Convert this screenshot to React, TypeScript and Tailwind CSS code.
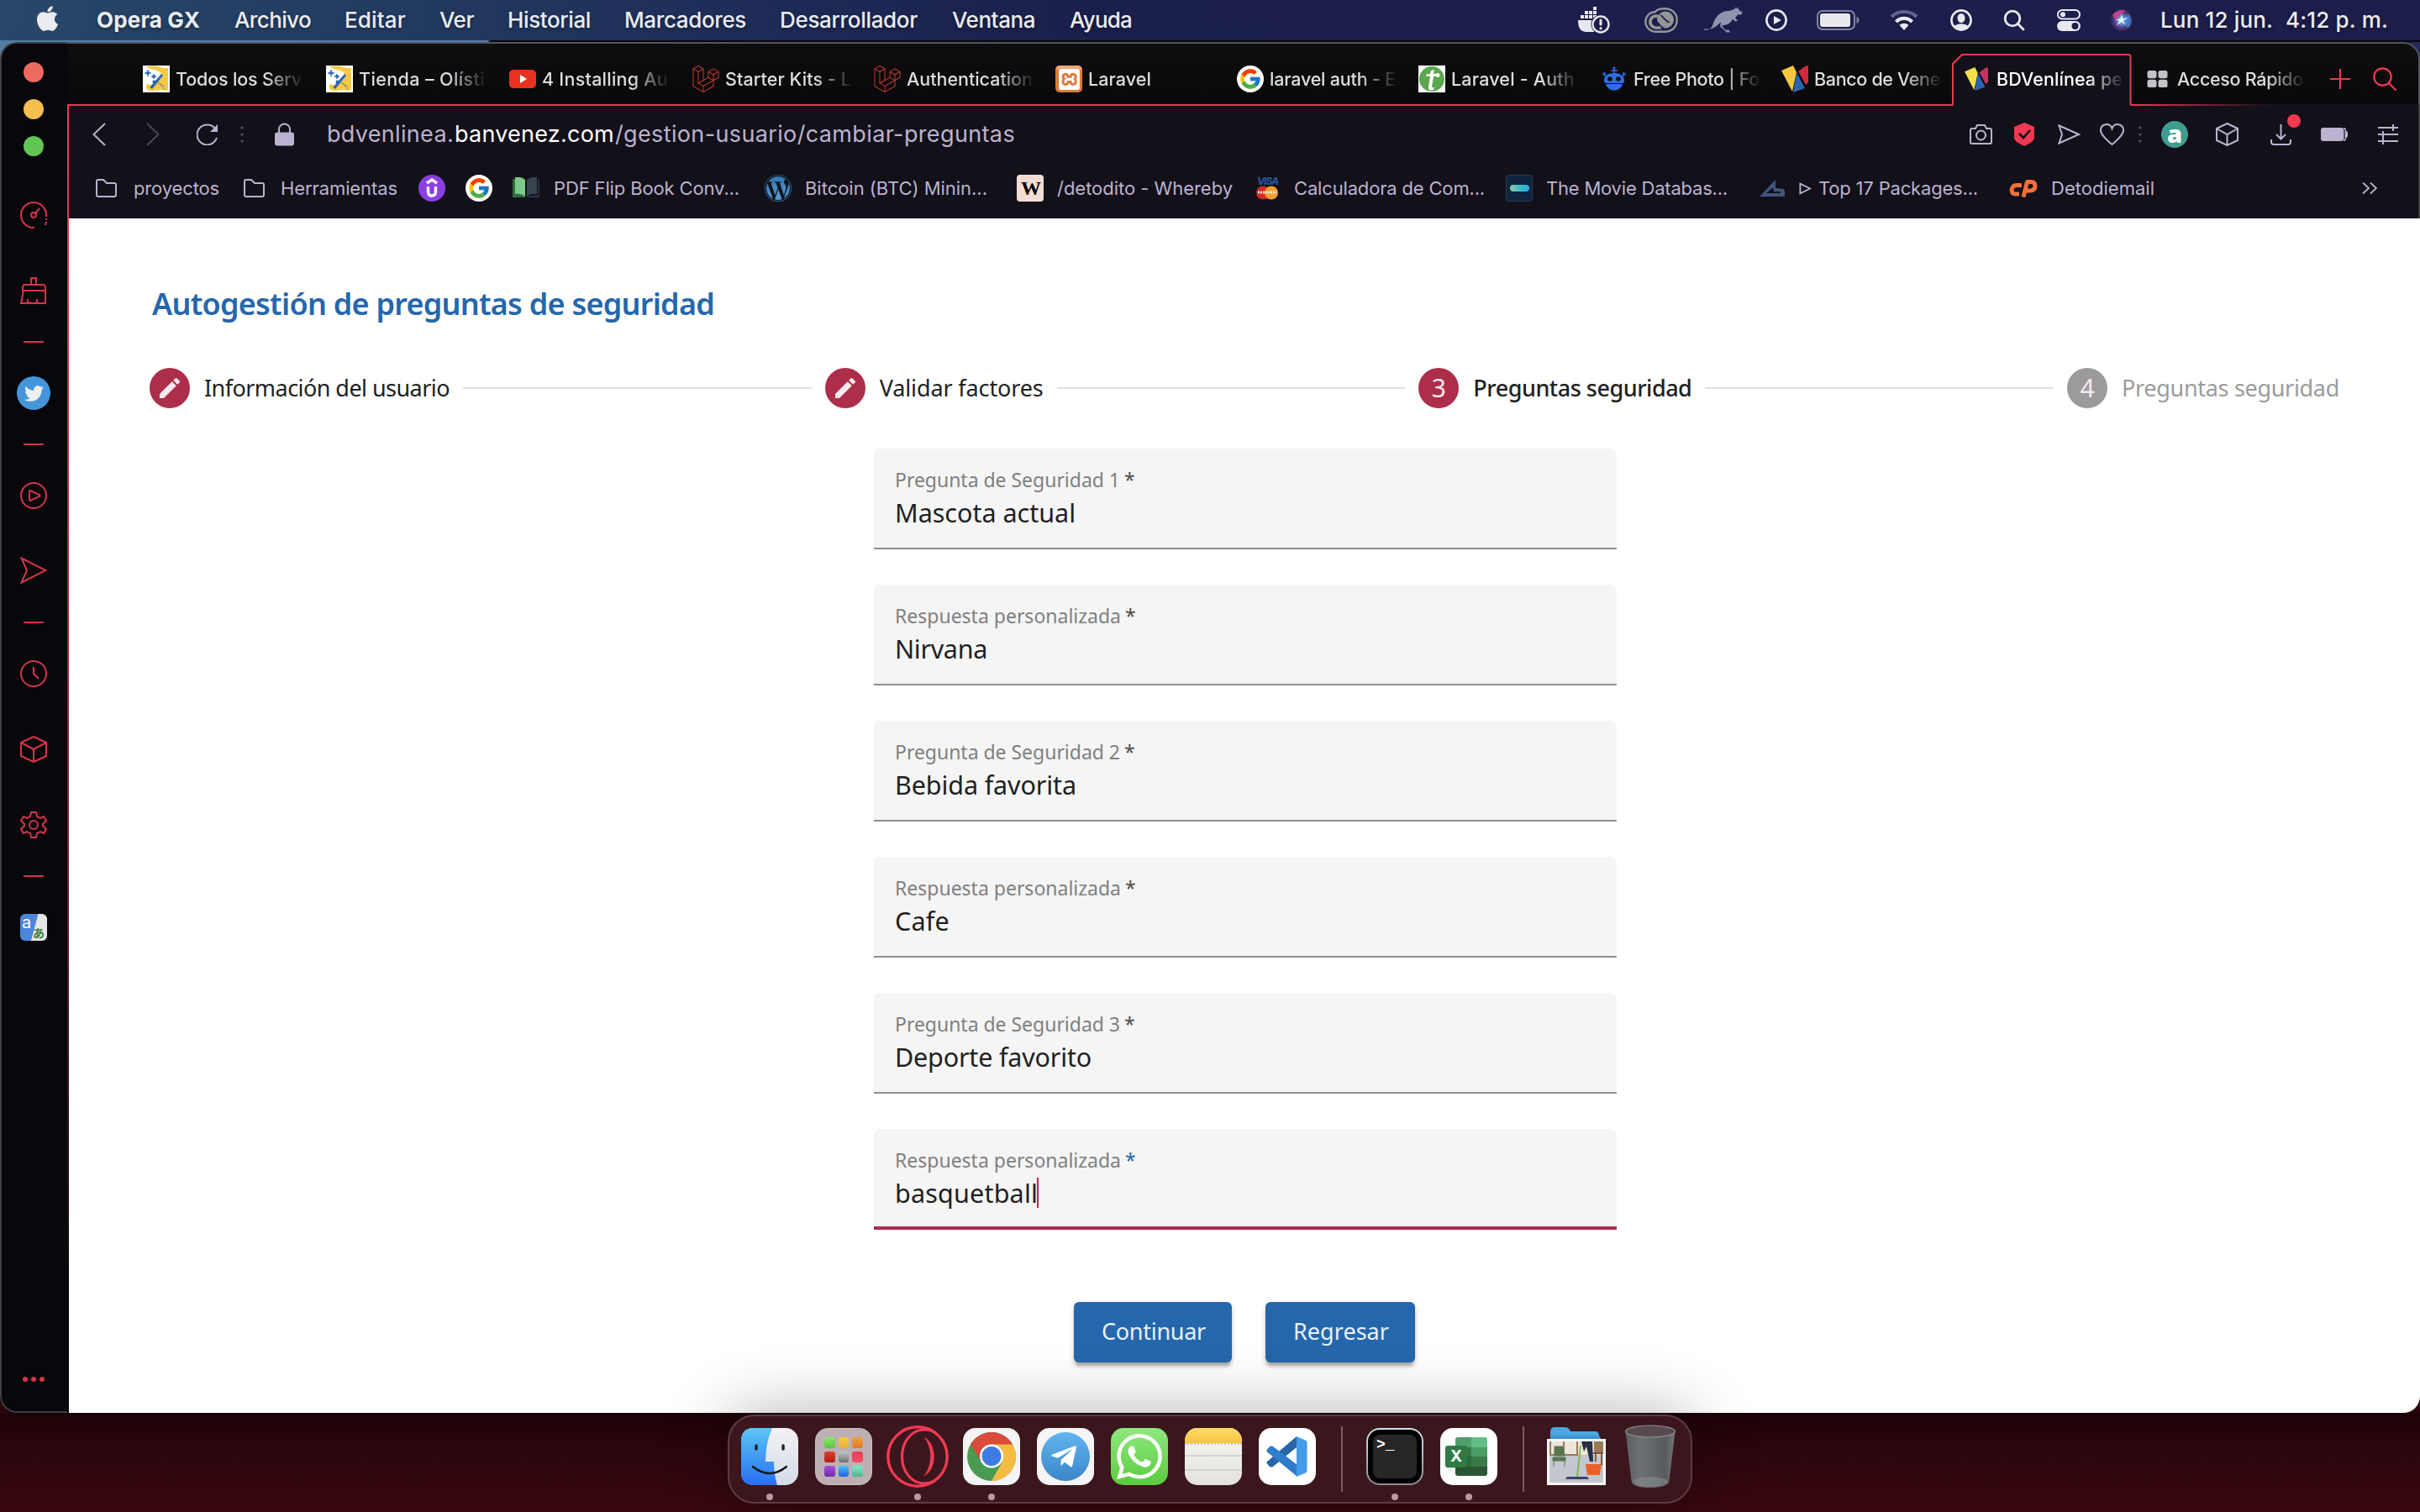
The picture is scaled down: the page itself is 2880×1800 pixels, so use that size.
import { useLayoutEffect, useRef, type ReactNode } from "react";
import { FaApple, FaDocker, FaLaravel, FaTwitter, FaWordpressSimple, FaTelegramPlane } from "react-icons/fa";
import { FcGoogle } from "react-icons/fc";
import { SiXampp, SiWhatsapp } from "react-icons/si";

/** Single line of text whose letter spacing is adjusted so that it fills its box. */
function Fit({ children, className = "" }: { children: string; className?: string }) {
  const box = useRef<HTMLSpanElement>(null);
  const text = useRef<HTMLSpanElement>(null);
  useLayoutEffect(() => {
    if (!box.current || !text.current) return;
    text.current.style.letterSpacing = "0px";
    const space = box.current.getBoundingClientRect().width - 1 - text.current.getBoundingClientRect().width;
    text.current.style.letterSpacing = `${space / children.length}px`;
  }, [children]);
  return (
    <span ref={box} className={`block shrink-0 pl-[1px] whitespace-pre ${className}`}>
      <span ref={text}>{children}</span>
    </span>
  );
}

/* ---------- menu bar ---------- */

const menus: [string, string][] = [
  ["Archivo", "w-[92px] ml-[40px]"],
  ["Editar", "w-[74px] ml-[39px]"],
  ["Ver", "w-[42px] ml-[39px]"],
  ["Historial", "w-[100px] ml-[39px]"],
  ["Marcadores", "w-[146px] ml-[39px]"],
  ["Desarrollador", "w-[165px] ml-[39px]"],
  ["Ventana", "w-[100px] ml-[40px]"],
  ["Ayuda", "w-[75px] ml-[40px]"],
];

function MenuBar() {
  return (
    <header className="flex h-[48px] items-center bg-[linear-gradient(90deg,#284769_0%,#223a60_17%,#1e2b56_32%,#1b1f4c_44%,#1c1d4a_100%)] pr-[38px] pb-[1px] pl-[43px] text-[26px] font-medium text-[#ebecf1] [text-shadow:0_2px_4px_rgba(0,0,0,0.35)]">
      <FaApple className="-mt-1 h-[34px] w-[27px] shrink-0" />
      <Fit className="ml-[44px] w-[124px] font-bold">Opera GX</Fit>
      {menus.map(([label, cls]) => (
        <Fit key={label} className={cls}>
          {label}
        </Fit>
      ))}
      <div className="ml-auto flex items-center">
        <svg viewBox="0 0 40 34" className="h-[34px] w-[40px]" fill="#e8e8ee">
          <path d="M1 17h23a10 10 0 0 0-2 14H11C4 31 1 26 1 17z" />
          <path d="M4 11h4v4H4zM9 11h4v4H9zM14 11h4v4h-4zM19 11h4v4h-4zM9 6h4v4H9zM14 6h4v4h-4zM19 1h4v4h-4zM19 6h4v4h-4z" />
          <circle cx="28" cy="22" r="11.500" fill="#1c1d4a" />
          <circle cx="28" cy="22" r="9.500" fill="#1c1d4a" stroke="#e8e8ee" strokeWidth="2.400" />
          <path d="M28 17v5M28 26.500v.5" stroke="#e8e8ee" strokeWidth="3" strokeLinecap="round" />
        </svg>
        <svg viewBox="0 0 40 30" className="ml-[40px] h-[30px] w-[40px]">
          <path
            d="M13 5C15 2.500 19 1.300 24 1.300c8 0 14.700 5 14.700 13.200S33 28.700 25 28.700H14C7 28.700 1.300 23.500 1.300 17 1.300 10.500 6 5.500 13 5z"
            fill="none"
            stroke="#959597"
            strokeWidth="2.400"
          />
          <circle cx="25" cy="14.500" r="10" fill="#959597" />
          <path d="M20 24h-6a7 7 0 1 1 3-13.300c3 1.300 5 6.300 9 8.300" fill="none" stroke="#959597" strokeWidth="3.600" />
          <path d="M12 16.500c4-1 6 6 11 8M19 9c4 2 6 8 11 8.500" fill="none" stroke="#1c1d4a" strokeWidth="1.600" />
        </svg>
        <svg viewBox="0 0 46 32" className="ml-[31px] h-[32px] w-[46px]" fill="#9093ab">
          <path d="M0 27.500c5 1 8-1 10-5C12 15 16 9 23 6c5-1.500 8-.5 11-2.500l3-1L36.500.500l2.500 2 .5-2.500 2 4 4.500 3-2 2.500h-4l-3 4 3 3-3 1-3-3c-1 3-4 6-8 7l-5 1 4 5 5 .500.500 2.500h-3.500l-8-7 1-5c-4 3-6 6-12 8H0z" />
        </svg>
        <svg viewBox="0 0 26 26" className="ml-[27px] size-[26px]" fill="none" stroke="#e8e8ee" strokeWidth="2.600">
          <circle cx="13" cy="13" r="11.600" />
          <path d="M10 8l9 5-9 5z" fill="#e8e8ee" stroke="none" />
        </svg>
        <svg viewBox="0 0 51 24" className="ml-[35px] h-[24px] w-[51px]">
          <rect x="1" y="1" width="44" height="22" rx="6" fill="none" stroke="#83849f" strokeWidth="2" />
          <rect x="4" y="4" width="36" height="16" rx="3" fill="#e8e8ee" />
          <path d="M47.500 8c4 1 4 7 0 8z" fill="#83849f" />
        </svg>
        <svg viewBox="0 0 34 25" className="ml-[36px] h-[25px] w-[34px]" fill="none" strokeWidth="4.200">
          <path d="M2 9c8-8 22-8 30 0" stroke="#62648a" />
          <path d="M7.500 15c5-5.500 14-5.500 19 0" stroke="#e8e8ee" />
          <path d="M11.500 19c3-3 8-3 11 0L17 25z" fill="#e8e8ee" />
        </svg>
        <svg viewBox="0 0 26 26" className="ml-[38px] size-[26px]" fill="none" stroke="#e8e8ee" strokeWidth="2.600">
          <circle cx="13" cy="13" r="11.600" />
          <ellipse cx="13" cy="10.500" rx="4.500" ry="5.500" fill="#e8e8ee" stroke="none" />
          <path d="M4 21c4-5 14-5 18 0-4 5-14 5-18 0z" fill="#e8e8ee" stroke="none" />
        </svg>
        <svg viewBox="0 0 26 26" className="ml-[37px] size-[26px]" fill="none" stroke="#e8e8ee" strokeWidth="2.800" strokeLinecap="round">
          <circle cx="11" cy="11" r="8.800" />
          <path d="M17.500 17.500l6.500 6.500" />
        </svg>
        <svg viewBox="0 0 28 26" className="ml-[38px] h-[26px] w-[28px]">
          <rect x="1" y="1" width="26" height="10.500" rx="5.250" fill="none" stroke="#e8e8ee" strokeWidth="2" />
          <circle cx="7" cy="6.200" r="3" fill="#e8e8ee" />
          <rect x="0" y="14" width="28" height="12" rx="6" fill="#e8e8ee" />
          <circle cx="21.500" cy="20" r="4" fill="#1c1d4a" />
        </svg>
        <svg viewBox="0 0 28 28" className="ml-[35px] size-[28px]">
          <defs>
            <radialGradient id="siri">
              <stop offset="0" stopColor="#e8f6fa" />
              <stop offset="0.3" stopColor="#5aa6c8" />
              <stop offset="0.65" stopColor="#5a3a8e" />
              <stop offset="1" stopColor="#2a2348" />
            </radialGradient>
          </defs>
          <circle cx="14" cy="14" r="13.500" fill="url(#siri)" />
          <path d="M3 8c4-6 12-7 16-5-5 2-9 6-11 12z" fill="#d8478f" opacity=".8" />
          <path d="M22 7c5 5 4 13-1 17-1-4-4-8-7-10z" fill="#3f8fe0" opacity=".7" />
          <path d="M14 6l.8 6.500 7-1.500-6 3.500 3 6-4.800-5-6 5 3.500-6-5-1 6-1z" fill="#eafaff" />
        </svg>
        <Fit className="ml-[31px] w-[135px]">Lun 12 jun.</Fit>
        <Fit className="ml-[14px] w-[123px]">4:12 p. m.</Fit>
      </div>
    </header>
  );
}

/* ---------- favicons ---------- */

const WandIcon = () => (
  <svg viewBox="0 0 32 32" className="size-[32px] shrink-0">
    <rect width="32" height="32" fill="#fff" />
    <path d="M4 2c8-3 14-1 20 1h6v26c-4 3-8-2-12 1-3-2-8 2-12-1-3-2-3-5 0-8l6 2 10-14C18 5 10 5 4 2z" fill="#f6c945" />
    <path d="M7 6l9 0 6 6-10 13-8-4z" fill="#fff" />
    <path d="M22 10l2 2L11 28l-3-2z" fill="#2b67b4" />
    <path d="M6 5l1 3 3 1-3 1-1 3-1-3-3-1 3-1zM13 10l1 2 2 1-2 1-1 2-1-2-2-1 2-1zM12 18h3v3h-3zM20 21l6 8M17 20l9 5" fill="#2b67b4" stroke="#2b67b4" strokeWidth=".6" />
  </svg>
);

const YouTubeIcon = () => (
  <svg viewBox="0 0 32 32" className="size-[32px] shrink-0">
    <rect y="5" width="32" height="22" rx="5" fill="#e8321f" />
    <path d="M13 11l8 5-8 5z" fill="#fff" />
  </svg>
);

const LaravelIcon = () => <FaLaravel className="size-[32px] shrink-0 text-[#c8392b]" />;

const XamppIcon = () => (
  <span className="flex size-[32px] shrink-0 items-center justify-center rounded-[5px] bg-[linear-gradient(#f0a878_0_3px,#e07a35_6px)]">
    <SiXampp className="size-[25px] text-white" />
  </span>
);

const GoogleIcon = () => (
  <span className="flex size-[32px] shrink-0 items-center justify-center rounded-full bg-white">
    <FcGoogle className="size-[28px]" />
  </span>
);

const TutIcon = () => (
  <svg viewBox="0 0 32 32" className="size-[32px] shrink-0">
    <rect width="32" height="32" fill="#fff" />
    <circle cx="16" cy="16" r="15" fill="#5ba64f" />
    <path d="M15 6l4-1-1 5h5l-1 3h-4l-2 12q0 2 3 1l-1 3q-7 2-6-4l2-12h-5l1-3h4z" fill="#fff" />
    <circle cx="23" cy="11.500" r="2.500" fill="#fff" />
  </svg>
);

const RobotIcon = () => (
  <svg viewBox="0 0 32 32" className="size-[32px] shrink-0" fill="#2c6fe0">
    <path d="M4 18C4 11 10 9 16 9s12 2 12 9c0 2-1 3-2 3H6c-1 0-2-1-2-3zM6 22h20c-1 5-6 7.500-10 7.500S7 27 6 22z" />
    <path d="M12 6h8M16 2v8M2 9l4 4M5 8l0 3M30 9l-4 4M27 8l0 3" stroke="#2c6fe0" strokeWidth="1.600" />
    <circle cx="16" cy="3" r="1.600" />
    <circle cx="11" cy="16" r="2.800" fill="#0b0b0f" />
    <circle cx="21" cy="16" r="2.800" fill="#0b0b0f" />
  </svg>
);

const BdvIcon = ({ active = false }: { active?: boolean }) => (
  <svg viewBox="0 0 32 32" className={active ? "mr-[3px] h-[30px] w-[28px] shrink-0" : "size-[32px] shrink-0"}>
    <path d="M0 6l14-6 4 8-5 23z" fill={active ? "#f5e04a" : "#f5c842"} />
    <path d="M20 7l8-6 4-1v20l-3 3z" fill={active ? "#c2335f" : "#cf2b3c"} />
    <path d="M18 8l10 19-14 5z" fill="#2b65ad" />
  </svg>
);

const SpeedDialIcon = () => (
  <svg viewBox="0 0 24 20" className="h-[20px] w-[25px] shrink-0" fill="#c3c4c8">
    <rect width="11" height="9.200" rx="2.600" />
    <rect x="13" width="11" height="9.200" rx="2.600" />
    <rect y="10.800" width="11" height="9.200" rx="2.600" />
    <rect x="13" y="10.800" width="11" height="9.200" rx="2.600" />
  </svg>
);

/* ---------- tab strip ---------- */

type TabDef = { icon: ReactNode; label: string; tab: string; text: string };

const tabs: TabDef[] = [
  { icon: <WandIcon />, label: "Todos los Serv", tab: "w-[218px]", text: "w-[151px]" },
  { icon: <WandIcon />, label: "Tienda – Olísti", tab: "w-[218px]", text: "w-[151px]" },
  { icon: <YouTubeIcon />, label: "4 Installing Au", tab: "w-[218px]", text: "w-[151px]" },
  { icon: <LaravelIcon />, label: "Starter Kits - L", tab: "w-[216px]", text: "w-[151px]" },
  { icon: <LaravelIcon />, label: "Authentication", tab: "w-[216px]", text: "w-[151px]" },
  { icon: <XamppIcon />, label: "Laravel", tab: "w-[216px]", text: "w-[76px]" },
  { icon: <GoogleIcon />, label: "laravel auth - E", tab: "w-[216px]", text: "w-[151px]" },
  { icon: <TutIcon />, label: "Laravel - Auth", tab: "w-[217px]", text: "w-[148px]" },
  { icon: <RobotIcon />, label: "Free Photo | Fo", tab: "w-[215px]", text: "w-[151px]" },
  { icon: <BdvIcon />, label: "Banco de Vene", tab: "w-[218px]", text: "w-[151px]" },
];

function TabLabel({ label, text, tone = "text-[#dedee0]" }: { label: string; text: string; tone?: string }) {
  return (
    <div className="ml-[6px] w-[154px] shrink-0 [mask-image:linear-gradient(90deg,#000_70%,transparent_100%)]">
      <Fit className={`${text} ${tone}`}>{label}</Fit>
    </div>
  );
}

function TabStrip() {
  return (
    <div className="h-[74px] rounded-tr-[20px] border-t-2 border-r-2 border-[#55565a] bg-[linear-gradient(180deg,#0e0e11,#09090c)]">
      <div className="mt-[12px] flex h-[60px] items-center pl-[76px] text-[21.500px] font-medium">
        {tabs.map((t, i) => (
          <div key={i} className={`flex shrink-0 items-center pl-[14px] ${t.tab}`}>
            {t.icon}
            <TabLabel label={t.label} text={t.text} />
          </div>
        ))}
        <div className="relative flex h-full w-[217px] shrink-0 items-center pl-[14px]">
          <svg viewBox="0 0 216 62" className="absolute top-0 -left-[1px] h-[62px] w-[216px]" fill="#121019" stroke="#ee3950" strokeWidth="2">
            <path d="M0 61.200q1 0 1-2V12L12 1h198q2.500 0 2.500 2.500V59q0 2 2 2.200" />
            <path d="M2 62h210" stroke="#121019" />
          </svg>
          <div className="relative flex items-center">
            <BdvIcon active />
            <TabLabel label="BDVenlínea pe" text="w-[151px]" tone="text-white" />
          </div>
        </div>
        <div className="flex w-[218px] shrink-0 items-center pl-[14px]">
          <SpeedDialIcon />
          <span className="w-[4px] shrink-0" />
          <TabLabel label="Acceso Rápido" text="w-[151px]" />
        </div>
        <svg viewBox="0 0 24 24" className="ml-[14px] size-[24px] shrink-0" stroke="#ee3950" strokeWidth="2.200">
          <path d="M12 0v24M0 12h24" />
        </svg>
        <svg viewBox="0 0 28 28" className="ml-[27px] size-[28px] shrink-0" fill="none" stroke="#ee3950" strokeWidth="2.200">
          <circle cx="11.500" cy="11.500" r="10.200" />
          <path d="M19 19l8.500 8.500" />
        </svg>
      </div>
    </div>
  );
}

/* ---------- address bar ---------- */

const Dots = ({ className }: { className: string }) => (
  <svg viewBox="0 0 4 20" className={`h-[20px] w-[4px] shrink-0 ${className}`} fill="#57516a">
    <circle cx="2" cy="2" r="1.600" />
    <circle cx="2" cy="10" r="1.600" />
    <circle cx="2" cy="18" r="1.600" />
  </svg>
);

function AddressBar() {
  return (
    <div className="flex h-[68px] items-center pl-[28px] text-[27px] text-[#bbb3d0]">
      <svg viewBox="0 0 16 28" className="h-[28px] w-[16px]" fill="none" stroke="#bbb3d0" strokeWidth="2">
        <path d="M15 1L1.500 14 15 27" />
      </svg>
      <svg viewBox="0 0 16 28" className="ml-[48px] h-[28px] w-[16px]" fill="none" stroke="#4a4557" strokeWidth="2">
        <path d="M1 1l13.500 13L1 27" />
      </svg>
      <svg viewBox="0 0 26 26" className="ml-[44px] size-[26px]" fill="none" stroke="#bbb3d0" strokeWidth="2">
        <path d="M24 17A12 12 0 1 1 22 6" />
        <path d="M25 1v9h-9z" fill="#bbb3d0" stroke="none" />
      </svg>
      <Dots className="ml-[26px]" />
      <svg viewBox="0 0 23 28" className="ml-[37px] h-[28px] w-[23px]">
        <path d="M5 13V8a6.500 6.500 0 0 1 13 0v5" fill="none" stroke="#bbb3d0" strokeWidth="2" />
        <rect y="11.500" width="23" height="16" rx="3" fill="#bbb3d0" />
      </svg>
      <div className="ml-[38px] flex pt-[1px]">
        <Fit className="w-[152px]">bdvenlinea.</Fit>
        <Fit className="w-[191px] text-white">banvenez.com</Fit>
        <Fit className="w-[477px]">/gestion-usuario/cambiar-preguntas</Fit>
      </div>
      <div className="mr-[24px] ml-auto flex items-center">
        <svg viewBox="0 0 27 24" className="h-[24px] w-[27px]" fill="none" stroke="#bbb3d0" strokeWidth="2">
          <path d="M1 21V7q0-2 2-2h4l2-4h9l2 4h4q2 0 2 2v14q0 2-2 2H3q-2 0-2-2z" />
          <circle cx="13.500" cy="13" r="5.500" />
        </svg>
        <svg viewBox="0 0 24 28" className="ml-[26px] h-[28px] w-[24px]">
          <path d="M12 0l12 5v13c0 4-6 7-12 10C6 25 0 22 0 18V5z" fill="#ee3950" />
          <path d="M6 13l5 5 8-9" fill="none" stroke="#121019" strokeWidth="2.600" />
        </svg>
        <svg viewBox="0 0 27 24" className="ml-[28px] h-[24px] w-[27px]" fill="none" stroke="#bbb3d0" strokeWidth="2">
          <path d="M1.500 1.500L25 12 1.500 22.500 5 12z" />
        </svg>
        <svg viewBox="0 0 29 26" className="ml-[23px] h-[26px] w-[29px]" fill="none" stroke="#bbb3d0" strokeWidth="2">
          <path d="M14.500 25C6 18 1 13 1 8c0-8 11-9.500 13.500-2C17-1.500 28 0 28 8c0 5-5 10-13.500 17z" />
        </svg>
        <Dots className="ml-[17px]" />
        <span className="ml-[23px] flex size-[32px] items-center justify-center rounded-full bg-[#3f9d8f] pb-[4px] font-['Open_Sans'] text-[29px] leading-none font-extrabold text-white">
          a
        </span>
        <svg viewBox="0 0 27 28" className="ml-[33px] h-[28px] w-[27px]" fill="none" stroke="#bbb3d0" strokeWidth="2">
          <path d="M13.500 1L26 7v14l-12.500 6L1 21V7zM1 7l12.500 7L26 7M13.500 14v13" />
        </svg>
        <div className="relative ml-[38px]">
          <svg viewBox="0 0 25 25" className="size-[25px]" fill="none" stroke="#bbb3d0" strokeWidth="2">
            <path d="M12.500 0v17M7 12l5.500 5.500L18 12M1 18v3q0 3 3 3h17q3 0 3-3v-3" />
          </svg>
          <span className="absolute -top-[12px] left-[20px] size-[16px] rounded-full bg-[#ee3950]" />
        </div>
        <svg viewBox="0 0 32 16" className="ml-[35px] h-[16px] w-[32px]">
          <rect width="27" height="16" rx="3" fill="#bbb3d0" />
          <path d="M27 0q3 0 3 3v1q2 0 2 2v4q0 2-2 2v1q0 3-3 3z" fill="#bbb3d0" />
          <path d="M28 2v12" stroke="#121019" strokeWidth="1.200" />
        </svg>
        <svg viewBox="0 0 24 24" className="ml-[36px] size-[24px]" stroke="#bbb3d0" strokeWidth="2">
          <path d="M0 4h24M0 12h24M0 20h24M18 0v8M6 8v8M6 16v8" />
        </svg>
      </div>
    </div>
  );
}

/* ---------- bookmarks ---------- */

const Folder = ({ className = "" }: { className?: string }) => (
  <svg viewBox="0 0 25 22" className={`h-[22px] w-[25px] shrink-0 ${className}`} fill="none" stroke="#bbb3d0" strokeWidth="2">
    <path d="M1 19V3q0-2 2-2h6l4 4h9q2 0 2 2v12q0 2-2 2H3q-2 0-2-2z" />
  </svg>
);

function Bookmarks() {
  return (
    <div className="flex h-[66px] items-center pb-[6px] pl-[32px] text-[22px] text-[#bbb3d0]">
      <Folder />
      <Fit className="ml-[19px] w-[103px]">proyectos</Fit>
      <Folder className="ml-[29px]" />
      <Fit className="ml-[18px] w-[140px]">Herramientas</Fit>
      <svg viewBox="0 0 32 32" className="ml-[25px] size-[32px] shrink-0">
        <circle cx="16" cy="16" r="16" fill="#8c3fe0" />
        <path d="M10 10l6-4 6 4M11.500 14v6q0 5 4.500 5t4.500-5v-6" fill="none" stroke="#fff" strokeWidth="3.400" />
      </svg>
      <span className="ml-[24px]">
        <GoogleIcon />
      </span>
      <svg viewBox="0 0 32 26" className="ml-[24px] h-[26px] w-[32px] shrink-0">
        <path d="M0 2h3v18h12v4H0z" fill="#2f6b3c" />
        <path d="M3 0q8-1 12 3v20q-5-4-12-3z" fill="#7cc88a" />
        <path d="M29 0q-8-1-12 3v20q5-4 12-3z" fill="#3a4350" />
        <path d="M30 2h2v22H17v-1.500l13-1z" fill="#2b323c" />
      </svg>
      <Fit className="ml-[16px] w-[222px]">PDF Flip Book Conv...</Fit>
      <span className="ml-[30px] flex size-[32px] shrink-0 items-center justify-center rounded-full bg-[linear-gradient(#2f74b0,#56a0d4)]">
        <FaWordpressSimple className="size-[32px] text-[#11141d]" />
      </span>
      <Fit className="ml-[15px] w-[218px]">Bitcoin (BTC) Minin...</Fit>
      <span className="ml-[35px] flex size-[32px] shrink-0 items-center justify-center rounded-[4px] bg-[#f3dcd4] font-['Liberation_Serif'] text-[24px] leading-none font-bold tracking-[-2px] text-black">
        W
      </span>
      <Fit className="ml-[15px] w-[210px]">/detodito - Whereby</Fit>
      <span className="ml-[27px] flex w-[28px] shrink-0 flex-col items-center">
        <Fit className="h-[11px] w-[26px] text-[12px] leading-[11px] font-extrabold text-[#23569c] italic">VISA</Fit>
        <svg viewBox="0 0 28 17" className="h-[17px] w-[28px]">
          <circle cx="9" cy="8.500" r="8" fill="#d42b22" />
          <circle cx="19" cy="8.500" r="8" fill="#f0a030" />
          <path d="M3 8h22" stroke="#f6e8dc" strokeWidth="3" strokeDasharray="2 1" />
        </svg>
      </span>
      <Fit className="ml-[17px] w-[228px]">Calculadora de Com...</Fit>
      <span className="ml-[25px] flex size-[32px] shrink-0 items-center justify-center rounded-[4px] border border-[#2a3c50] bg-[#0d253f]">
        <span className="h-[8px] w-[23px] rounded-full bg-[linear-gradient(90deg,#90cea1,#3cbec9,#31abe0)]" />
      </span>
      <Fit className="ml-[15px] w-[217px]">The Movie Databas...</Fit>
      <svg viewBox="0 0 30 20" className="ml-[38px] h-[20px] w-[30px] shrink-0" fill="#40557f">
        <path d="M0 20L19 0v10l10 1 1 3v6H0zM8 16h17v-2h-8l-1-5z" fillRule="evenodd" />
      </svg>
      <svg viewBox="0 0 16 16" className="ml-[17px] h-[15px] w-[15px] shrink-0" fill="none" stroke="#bbb3d0" strokeWidth="2">
        <path d="M1.500 1.800L14 8 1.500 14.200z" />
      </svg>
      <Fit className="ml-[7px] w-[191px]">Top 17 Packages...</Fit>
      <svg viewBox="0 0 34 22" className="ml-[37px] h-[22px] w-[34px] shrink-0" fill="none" stroke="#f0703a" strokeWidth="5" strokeLinejoin="round">
        <path d="M15 7.500H9q-5 0-6 5.500 0 5 5 5h4" />
        <path d="M17 21.500l4.500-18H26q5 0 5 5t-6 5.500h-5" />
      </svg>
      <Fit className="ml-[15px] w-[124px]">Detodiemail</Fit>
      <svg viewBox="0 0 18 14" className="mr-[49px] ml-auto h-[14px] w-[18px] shrink-0" fill="none" stroke="#bbb3d0" strokeWidth="1.800">
        <path d="M1 .500L8 7l-7 6.500M10 .500L17 7l-7 6.500" />
      </svg>
    </div>
  );
}

/* ---------- sidebar ---------- */

const SideLine = ({ className }: { className: string }) => <span className={`h-[2px] w-[24px] shrink-0 bg-[#d4344a] ${className}`} />;

function SideIcon({ className, children }: { className: string; children: ReactNode }) {
  return (
    <svg viewBox="0 0 32 32" className={`size-[32px] shrink-0 ${className}`} fill="none" stroke="#d4344a" strokeWidth="2">
      {children}
    </svg>
  );
}

function Sidebar() {
  return (
    <aside className="flex w-[80px] shrink-0 flex-col items-center rounded-l-[20px] border-t-2 border-b-2 border-l-2 border-[#3d3e42] bg-[#08080c] pt-[22px] pr-[2px] pb-[35px]">
      <span className="size-[24px] shrink-0 rounded-full bg-[#ed6a5e]" />
      <span className="mt-[20px] size-[24px] shrink-0 rounded-full bg-[#f5bf4f]" />
      <span className="mt-[20px] size-[24px] shrink-0 rounded-full bg-[#61c554]" />
      <SideIcon className="mt-[54px]">
        <path d="M17 31A15 15 0 1 1 31 16v2" />
        <path d="M31 20v2M31 24v2M29 27h2" />
        <circle cx="16" cy="16" r="3" />
        <path d="M18 14l5-6" />
      </SideIcon>
      <SideIcon className="mt-[58px]">
        <path d="M13 9V1h6v8M5 9h22q3 0 3 4v3H3v-3q0-4 2-4zM4 16L1 31h29V16M9 31v-5M20 31v-5M12 31v-2" />
      </SideIcon>
      <SideLine className="mt-[44px]" />
      <span className="mt-[40px] flex size-[40px] shrink-0 items-center justify-center rounded-full bg-[#4495d9]">
        <FaTwitter className="size-[23px] text-[#efefef]" />
      </span>
      <SideLine className="mt-[40px]" />
      <SideIcon className="mt-[44px]">
        <circle cx="16" cy="16" r="15" />
        <path d="M11 11v10q0 1 1 1l11-5q1-1 0-2l-11-5q-1 0-1 1z" />
      </SideIcon>
      <SideIcon className="mt-[57px]">
        <path d="M1.500 1.500L30.500 16l-29 14.500L8 16z" />
      </SideIcon>
      <SideLine className="mt-[45px]" />
      <SideIcon className="mt-[44px]">
        <circle cx="16" cy="16" r="15" />
        <path d="M16 8v8l6 6" />
      </SideIcon>
      <SideIcon className="mt-[58px]">
        <path d="M16 1l15 7v16l-15 7-15-7V8zM1 8l15 8 15-8M16 16v15" />
      </SideIcon>
      <SideIcon className="mt-[58px]">
        <circle cx="16" cy="16" r="5" />
        <path d="M13 1h6l1 5 4 2 4-2 3 5-4 4v2l4 4-3 5-4-2-4 2-1 5h-6l-1-5-4-2-4 2-3-5 4-4v-2l-4-4 3-5 4 2 4-2z" />
      </SideIcon>
      <SideLine className="mt-[44px]" />
      <span className="mt-[44px] flex size-[32px] shrink-0 rounded-[6px] bg-[linear-gradient(105deg,#4a86dc_0_52%,#e6e6e6_54%)]">
        <span className="w-[15px] pl-[2px] text-[20px] leading-[20px] text-white">a</span>
        <span className="mt-[13px] font-['Noto_Sans_CJK_JP'] text-[14px] leading-[19px] font-bold text-[#3f7d3a]">あ</span>
      </span>
      <svg viewBox="0 0 26 6" className="mt-auto h-[6px] w-[26px] shrink-0" fill="#d4344a">
        <circle cx="3" cy="3" r="3" />
        <circle cx="13" cy="3" r="3" />
        <circle cx="23" cy="3" r="3" />
      </svg>
    </aside>
  );
}

/* ---------- page ---------- */

const Pencil = () => (
  <svg viewBox="0 0 24 24" className="size-[32px]" fill="#f8e9ed">
    <path d="M3 17.250V21h3.750L17.810 9.940l-3.750-3.750L3 17.250zM20.710 7.040a1 1 0 0 0 0-1.410l-2.340-2.340a1 1 0 0 0-1.410 0l-1.830 1.830 3.750 3.750 1.830-1.830z" />
  </svg>
);

const StepLine = () => <span className="h-[2px] flex-1 bg-[#e0e0e0]" />;

function Step({ mark, label, text, done = true }: { mark: ReactNode; label: string; text: string; done?: boolean }) {
  return (
    <>
      <span className={`flex size-[48px] shrink-0 items-center justify-center rounded-full text-[30px] leading-none text-[#f8e9ed] ${done ? "bg-[#ad2e4a]" : "bg-[#9b9b9b]"}`}>
        {mark}
      </span>
      <Fit className={text}>{label}</Fit>
    </>
  );
}

const fields: { label: string; value: string; labelW: string; valueW: string; focused?: boolean }[] = [
  { label: "Pregunta de Seguridad 1", value: "Mascota actual", labelW: "w-[269px]", valueW: "w-[216px]" },
  { label: "Respuesta personalizada", value: "Nirvana", labelW: "w-[270px]", valueW: "w-[111px]" },
  { label: "Pregunta de Seguridad 2", value: "Bebida favorita", labelW: "w-[269px]", valueW: "w-[217px]" },
  { label: "Respuesta personalizada", value: "Cafe", labelW: "w-[270px]", valueW: "w-[66px]" },
  { label: "Pregunta de Seguridad 3", value: "Deporte favorito", labelW: "w-[269px]", valueW: "w-[235px]" },
  { label: "Respuesta personalizada", value: "basquetball", labelW: "w-[270px]", valueW: "w-[171px]", focused: true },
];

function Page() {
  return (
    <main className="flex-1 bg-white pt-[78px] pr-[96px] pl-[98px] font-['Noto_Sans',sans-serif] text-[#212121]">
      <h1 className="text-[36px] leading-[48px] font-semibold text-[#2567ac]">
        <Fit className="w-[670px]">Autogestión de preguntas de seguridad</Fit>
      </h1>
      <div className="mt-[52px] -ml-[2px] flex h-[48px] items-center gap-[16px] text-[27px]">
        <Step mark={<Pencil />} label="Información del usuario" text="w-[293px]" />
        <StepLine />
        <Step mark={<Pencil />} label="Validar factores" text="w-[196px]" />
        <StepLine />
        <Step mark="3" label="Preguntas seguridad" text="w-[261px] font-medium" />
        <StepLine />
        <Step mark="4" label="Preguntas seguridad" text="w-[260px] text-[#9b9b9b]" done={false} />
      </div>
      <form className="mx-auto mt-[48px] flex w-[884px] flex-col gap-[42px]">
        {fields.map((f, i) => (
          <div
            key={i}
            className={`h-[120px] rounded-t-[8px] bg-[#f5f5f5] px-[24px] pt-[22px] ${f.focused ? "border-b-4 border-[#ad2e4a]" : "border-b-2 border-[#8f8f8f]"}`}
          >
            <div className="flex gap-[5px] text-[23px] leading-[30px] text-[#808080]">
              <Fit className={f.labelW}>{f.label}</Fit>
              <span className={f.focused ? "text-[#2567ac]" : "text-[#4c4c4c]"}>*</span>
            </div>
            <div className="mt-[4px] flex items-center text-[30.500px] leading-[40px]">
              <Fit className={f.valueW}>{f.value}</Fit>
              {f.focused && <span className="-ml-[1px] h-[36px] w-[2px] bg-[#ad2e4a]" />}
            </div>
          </div>
        ))}
      </form>
      <div className="mt-[86px] flex justify-center gap-[40px] pr-[2px] text-[27px] leading-[70px] text-[#e9f0f7]">
        <button className="h-[72px] w-[188px] rounded-[6px] bg-[#2567ac] pb-[2px] pl-[32px] text-left shadow-[0_6px_4px_-2px_rgba(0,0,0,0.25),0_3px_6px_rgba(0,0,0,0.2)]">
          <Fit className="w-[125px]">Continuar</Fit>
        </button>
        <button className="h-[72px] w-[178px] rounded-[6px] bg-[#2567ac] pb-[2px] pl-[32px] text-left shadow-[0_6px_4px_-2px_rgba(0,0,0,0.25),0_3px_6px_rgba(0,0,0,0.2)]">
          <Fit className="w-[115px]">Regresar</Fit>
        </button>
      </div>
    </main>
  );
}

/* ---------- dock ---------- */

function DockItem({ children, running = false, className = "" }: { children: ReactNode; running?: boolean; className?: string }) {
  return (
    <div className={`flex h-full w-[68px] shrink-0 flex-col items-center ${className}`}>
      <div className="mt-[10px] flex h-[76px] items-center justify-center">{children}</div>
      {running && <span className="mt-[6px] size-[8px] rounded-full bg-[#c097a0]" />}
    </div>
  );
}

const Separator = ({ className }: { className: string }) => <span className={`mt-[12px] h-[78px] w-[2px] shrink-0 bg-[#7c5b61] ${className}`} />;

const Finder = () => (
  <svg viewBox="0 0 68 68" className="size-[68px]">
    <defs>
      <linearGradient id="fb" x2="0" y2="1">
        <stop stopColor="#5ac6f8" />
        <stop offset="1" stopColor="#2a6ff0" />
      </linearGradient>
      <linearGradient id="fw" x2="0" y2="1">
        <stop stopColor="#f2f2f4" />
        <stop offset="1" stopColor="#d3dbe6" />
      </linearGradient>
    </defs>
    <rect width="68" height="68" rx="15" fill="url(#fw)" />
    <path d="M37 0H15Q0 0 0 15v38q0 15 15 15h28q-4-12-4-28H29Q29 18 37 0z" fill="url(#fb)" />
    <path d="M18 21v4M50 21v4" stroke="#1f2530" strokeWidth="3.500" strokeLinecap="round" />
    <path d="M14 46q20 16 40 0" fill="none" stroke="#11151c" strokeWidth="2.400" strokeLinecap="round" />
  </svg>
);

const launchColors = [
  "bg-[linear-gradient(#8fe870,#56c53a)]",
  "bg-[linear-gradient(#f7cb45,#f0ae36)]",
  "bg-[linear-gradient(#f0a136,#dd7a2c)]",
  "bg-[linear-gradient(#e0402f,#aa1f16)]",
  "bg-[linear-gradient(#bfc8cc,#6b7072)]",
  "bg-[linear-gradient(#ea3c56,#ec5360)]",
  "bg-[linear-gradient(#a94ee0,#6b2fa8)]",
  "bg-[linear-gradient(#46c3fa,#2160e0)]",
  "bg-[linear-gradient(#86e8c8,#4fb58c)]",
];

const Launchpad = () => (
  <div className="grid size-[68px] grid-cols-3 place-content-center gap-x-[4px] gap-y-[4px] rounded-[15px] border border-[#ccc0c4] bg-[#bdb0b5] px-[10px]">
    {launchColors.map((c) => (
      <span key={c} className={`h-[13px] rounded-[3px] ${c}`} />
    ))}
  </div>
);

const Opera = () => (
  <svg viewBox="0 0 74 74" className="size-[74px] shrink-0" fill="none" stroke="#f03a54">
    <circle cx="37" cy="37" r="35.200" strokeWidth="3.400" />
    <path d="M58 8.500C53 6 49 5 45 5 29 5 18.500 20 18.500 37S29 69 45 69c4 0 8-1 13-3.500" strokeWidth="3.200" />
    <path d="M44 13c17 9 17 39 0 48 11-13 11-35 0-48z" fill="#f03a54" stroke="none" />
  </svg>
);

const Chrome = () => (
  <svg viewBox="0 0 68 68" className="size-[68px]">
    <rect width="68" height="68" rx="15" fill="#f4f4f5" />
    <circle cx="34" cy="34" r="29" fill="#4b9a52" />
    <path d="M34 34L9 19.500A29 29 0 0 1 59.100 19.500z" fill="#da4b3c" />
    <path d="M9 19.500L22 41l12-7V19.500z" fill="#da4b3c" />
    <path d="M34 19.500h25.100A29 29 0 0 1 34 63l12.500-22z" fill="#f4bd42" />
    <circle cx="34" cy="33.500" r="14" fill="#fff" />
    <circle cx="34" cy="33.500" r="11.500" fill="#3f7be4" />
  </svg>
);

const Telegram = () => (
  <div className="flex size-[68px] items-center justify-center rounded-[15px] bg-[#f5f5f6]">
    <div className="flex size-[58px] items-center justify-center rounded-full bg-[linear-gradient(#62b5ef,#3a86c8)] pr-[4px]">
      <FaTelegramPlane className="size-[34px] text-white" />
    </div>
  </div>
);

const WhatsApp = () => (
  <div className="flex size-[68px] items-center justify-center rounded-[15px] bg-[linear-gradient(#8fe87e,#5bcb3f)]">
    <SiWhatsapp className="size-[54px] text-white" />
  </div>
);

const Notes = () => (
  <div className="size-[68px] overflow-hidden rounded-[15px] bg-[linear-gradient(#f7f7f6,#e4e2dd)]">
    <div className="h-[18px] bg-[linear-gradient(#fbdb6c,#f8c63c)]" />
    <div className="border-t-2 border-dotted border-[#c9c7c4]" />
    <div className="mt-[12px] h-[2px] bg-[#d6d5d2]" />
    <div className="mt-[15px] h-[2px] bg-[#d6d5d2]" />
  </div>
);

const VsCode = () => (
  <svg viewBox="0 0 68 68" className="size-[68px]">
    <rect width="68" height="68" rx="15" fill="#fff" />
    <path d="M9.500 42l3.500 4q2 1 4 0L45 23V10L10 40q-1 1-.5 2z" fill="#2766a6" />
    <path d="M9.500 26l3.500-4q2-1 4 0l29 22v14L10 28.500q-1-1-.5-2.500z" fill="#2f7cc9" />
    <path d="M45 10l10.500 4.500q2 1 2 3v33q0 2-2 3L45 58V10z" fill="#449be8" />
  </svg>
);

const Terminal = () => (
  <div className="size-[68px] rounded-[16px] bg-[linear-gradient(#cfe3ee,#8b8b8d)] p-[2px]">
    <div className="size-[64px] rounded-[14px] bg-black p-[6px]">
      <div className="h-[52px] w-[52px] rounded-[8px] bg-[#262626] pt-[2px] pl-[4px] font-['Liberation_Mono'] text-[18px] leading-[20px] font-bold text-white">
        &gt;_
      </div>
    </div>
  </div>
);

const Excel = () => (
  <div className="flex size-[68px] items-center rounded-[15px] bg-white pl-[6px]">
    <span className="relative z-10 flex h-[26px] w-[26px] items-center justify-center rounded-[3px] bg-[#307a44] text-[19px] font-bold text-white shadow-md">X</span>
    <div className="-ml-[14px] grid h-[46px] w-[38px] grid-cols-2 grid-rows-4 overflow-hidden rounded-[3px]">
      <span className="bg-[#4f9f68]" />
      <span className="bg-[#62bf86]" />
      <span className="bg-[#367a48]" />
      <span className="bg-[#4d9c66]" />
      <span className="bg-[#2f6a3e]" />
      <span className="bg-[#3a7a48]" />
      <span className="bg-[#2c5736]" />
      <span className="bg-[#2c5736]" />
    </div>
  </div>
);

const DownloadsStack = () => (
  <svg viewBox="0 0 70 74" className="h-[74px] w-[70px] shrink-0">
    <path d="M4 20V8q0-6 5-6h13q3 0 5 3l1 2h29q5 0 5 5l4 8z" fill="#4ba8de" />
    <path d="M4 12h57l4 8H4z" fill="#3d95cf" />
    <rect y="16" width="70" height="55" fill="#f6f6f6" />
    <rect x="3" y="19" width="64" height="49" fill="#c3c7ce" />
    <rect x="3" y="19" width="64" height="16" fill="#ece5da" />
    <path d="M3 19h2v16H3zM19 19h2v16h-2zM35 19h2v16h-2zM3 34h34v2H3zM56 19h11v13H56z" fill="#9a7a5a" />
    <path d="M9 25h10l2 11H9zM7 38h15v4H7zM8 42v7M21 42v7" fill="#5a7550" stroke="#5a7550" />
    <path d="M41 19h13l1 24h-4l-4-18-3 6z" fill="#262f44" />
    <path d="M40 24l-4 37" stroke="#79b83c" strokeWidth="1.800" />
    <path d="M24 61h24l2 3H22z" fill="#3a4468" />
    <path d="M46 46h19l-2 13H48z" fill="#ea6028" />
    <path d="M55 33h12M58 33v10M65 33v14" stroke="#7a5434" strokeWidth="1.800" />
  </svg>
);

const Trash = () => (
  <svg viewBox="0 0 60 76" className="h-[76px] w-[60px] shrink-0">
    <defs>
      <linearGradient id="tr">
        <stop stopColor="#5b5f62" />
        <stop offset="0.3" stopColor="#6d7173" />
        <stop offset="0.8" stopColor="#585b5e" />
        <stop offset="1" stopColor="#73777a" />
      </linearGradient>
    </defs>
    <path d="M.500 8l7 59q1 8 22.500 8t22.500-8l7-59z" fill="url(#tr)" />
    <path d="M9 67q6-5 21-5t21 5q-2 7-21 7T9 67z" fill="#858a8c" opacity=".6" />
    <ellipse cx="30" cy="8" rx="29.500" ry="7" fill="#584a4f" stroke="#8b8f91" strokeWidth="1.200" />
  </svg>
);

function Dock() {
  return (
    <nav className="relative mx-auto mt-[2px] flex h-[106px] w-[1148px] rounded-[32px] border-2 border-[#5d3b42] bg-[#3c161d] pl-[14px] shadow-[0_0_80px_rgba(0,0,0,0.32)]">
      <DockItem running>
        <Finder />
      </DockItem>
      <DockItem className="ml-[20px]">
        <Launchpad />
      </DockItem>
      <DockItem className="ml-[20px]" running>
        <Opera />
      </DockItem>
      <DockItem className="ml-[20px]" running>
        <Chrome />
      </DockItem>
      <DockItem className="ml-[20px]">
        <Telegram />
      </DockItem>
      <DockItem className="ml-[20px]">
        <WhatsApp />
      </DockItem>
      <DockItem className="ml-[20px]">
        <Notes />
      </DockItem>
      <DockItem className="ml-[20px]">
        <VsCode />
      </DockItem>
      <Separator className="ml-[30px]" />
      <DockItem className="ml-[28px]" running>
        <Terminal />
      </DockItem>
      <DockItem className="ml-[20px]" running>
        <Excel />
      </DockItem>
      <Separator className="ml-[30px]" />
      <DockItem className="ml-[28px]">
        <DownloadsStack />
      </DockItem>
      <DockItem className="ml-[20px]">
        <Trash />
      </DockItem>
    </nav>
  );
}

export default function App() {
  return (
    <div className="h-[1800px] w-[2880px] overflow-hidden bg-[linear-gradient(180deg,transparent_0_1682px,#1c0307_1682px,#2c060d_1730px,#39070f_1800px),linear-gradient(90deg,#5a7ba0,#26285a_40%,#26285a)] font-['Inter',sans-serif]">
      <MenuBar />
      <div className="h-[2px] bg-[linear-gradient(90deg,#4f7fa8_0_580px,#08080a_584px)]" />
      <div className="h-[1632px] bg-[linear-gradient(180deg,transparent_0_800px,#2a050c_800px)]">
        <div className="flex h-[1632px] overflow-hidden rounded-[20px]">
          <Sidebar />
          <div className="flex w-[2800px] flex-col">
            <TabStrip />
            <div className="flex flex-1">
              <span className="w-[2px] shrink-0 bg-[linear-gradient(180deg,#ee3950_0,#d4344a_250px,#7c2134_850px,#08080c_1400px)]" />
              <div className="flex flex-1 flex-col">
                <div className="border-r-2 border-[#3d3e42] bg-[#121019]">
                  <div className="flex h-[2px]">
                    <span className="w-[2242px] bg-[#ee3950]" />
                    <span className="ml-[212px] w-[170px] bg-[linear-gradient(90deg,#ee3950,#121019)]" />
                  </div>
                  <AddressBar />
                  <Bookmarks />
                </div>
                <Page />
              </div>
            </div>
          </div>
        </div>
      </div>
      <Dock />
    </div>
  );
}
